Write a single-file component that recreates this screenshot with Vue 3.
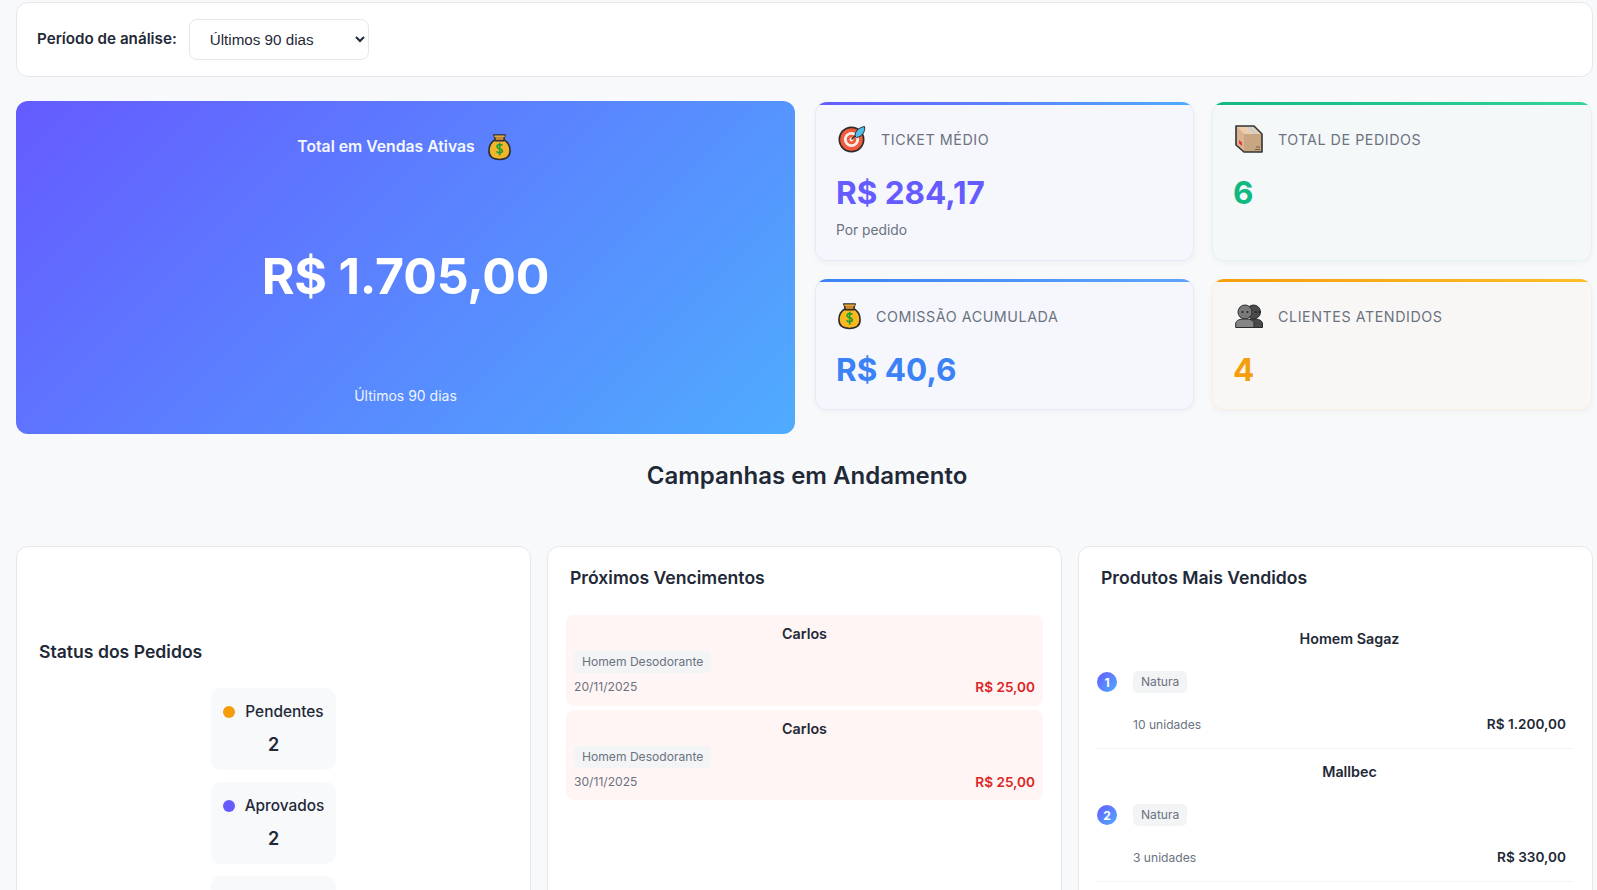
<template>
  <div class="page">
    <section class="filter-bar">
      <label class="filter-label" for="periodo">Período de análise:</label>
      <select id="periodo" class="filter-select">
        <option>Últimos 90 dias</option>
        <option>Últimos 30 dias</option>
        <option>Este ano</option>
      </select>
    </section>

    <section class="overview">
      <div class="hero">
        <div class="hero-title">
          <span>Total em Vendas Ativas</span>
          <svg class="emoji bag" viewBox="0 0 24 28"><use href="#bag-icon" /></svg>
        </div>
        <div class="hero-value">R$ 1.705,00</div>
        <div class="hero-sub">Últimos 90 dias</div>
      </div>

      <div class="stats">
        <article v-for="s in stats" :key="s.label" :class="['stat', s.tone]">
          <header class="stat-head">
            <svg v-if="s.icon === 'target'" class="emoji" viewBox="0 0 28 28">
              <circle cx="13.5" cy="14.5" r="13" fill="#2b2b2b" />
              <circle cx="13.5" cy="14.5" r="11.3" fill="#ef5b3c" />
              <circle cx="13.5" cy="14.5" r="7.6" fill="#f8efe8" />
              <circle cx="13.5" cy="14.5" r="4.8" fill="#ef5b3c" />
              <circle cx="13.5" cy="14.5" r="2" fill="#f8efe8" />
              <path d="M13.5 14.5 L19 9" stroke="#333" stroke-width="1.4" />
              <path d="M17 11 C17 6 21 2.5 26.5 1.5 C27.5 7 24 11.5 18.5 12.5 Z" fill="#4fc3ee" stroke="#2b2b2b" stroke-width="1" />
            </svg>
            <svg v-else-if="s.icon === 'box'" class="emoji" viewBox="0 0 28 28">
              <path d="M1 1 H19 L27 9 V27 H9 L1 20 Z" fill="#c9a682" />
              <path d="M1 1 H19 L27 9 H9 Z" fill="#eccdb0" />
              <path d="M1 1 L9 9 V27 L1 20 Z" fill="#d9b392" />
              <path d="M11 1 H15 L22 9 H18 Z" fill="#c9cfd6" />
              <path d="M4 15 L7 17.5 V21 L4 18.5 Z" fill="#e2374a" />
              <path d="M21 22 H25 M20 24.5 H25" stroke="#6f5a48" stroke-width="1" />
              <path d="M1 1 H19 L27 9 V27 H9 L1 20 Z" fill="none" stroke="#333" stroke-width="1.6" stroke-linejoin="round" />
            </svg>
            <svg v-else-if="s.icon === 'bag'" class="emoji bag" viewBox="0 0 24 28"><use href="#bag-icon" /></svg>
            <svg v-else class="emoji" viewBox="0 0 28 24">
              <circle cx="18.5" cy="8" r="7" fill="#4a4a4a" stroke="#2b2b2b" />
              <path d="M12 23.5 V20 C12 16.5 15 15 18.5 15 C23 15 27.5 16 27.5 20 V23.5 Z" fill="#4a4a4a" stroke="#2b2b2b" />
              <circle cx="10" cy="8" r="7" fill="#7a7a7a" stroke="#2b2b2b" />
              <path d="M.7 23.5 V20 C.7 16 5 15 10 15 C15 15 19 16 19 20 V23.5 Z" fill="#858585" stroke="#2b2b2b" />
              <circle cx="7.5" cy="8" r="1" fill="#222" />
              <circle cx="12.5" cy="8" r="1" fill="#222" />
              <circle cx="21" cy="8" r="1" fill="#222" />
              <circle cx="24.5" cy="8" r="1" fill="#222" />
            </svg>
            <span class="stat-label">{{ s.label }}</span>
          </header>
          <div class="stat-value">{{ s.value }}</div>
          <div v-if="s.note" class="stat-note">{{ s.note }}</div>
        </article>
      </div>
    </section>

    <h2 class="section-title">Campanhas em Andamento</h2>

    <section class="panels">
      <div class="panel panel-status">
        <h3 class="panel-title">Status dos Pedidos</h3>
        <div class="status-list">
          <div v-for="st in statuses" :key="st.name" class="status-item">
            <div class="status-name">
              <span class="dot" :style="{ background: st.color }"></span>
              {{ st.name }}
            </div>
            <div class="status-count">{{ st.count }}</div>
          </div>
          <!-- third status starts right at the fold, only its box shows -->
          <div class="status-item"></div>
        </div>
      </div>

      <div class="panel">
        <h3 class="panel-title">Próximos Vencimentos</h3>
        <div class="due-list">
          <div v-for="d in dues" :key="d.date" class="due">
            <div class="due-name">Carlos</div>
            <span class="chip due-chip">Homem Desodorante</span>
            <div class="due-foot">
              <span class="due-date">{{ d.date }}</span>
              <span class="due-price">R$ 25,00</span>
            </div>
          </div>
        </div>
      </div>

      <div class="panel">
        <h3 class="panel-title">Produtos Mais Vendidos</h3>
        <div class="products">
          <div v-for="(p, i) in products" :key="p.name" class="product">
            <div class="product-name">{{ p.name }}</div>
            <div class="product-brand">
              <span class="rank">{{ i + 1 }}</span>
              <span class="chip">Natura</span>
            </div>
            <div class="product-foot">
              <span class="units">{{ p.units }}</span>
              <span class="product-price">{{ p.price }}</span>
            </div>
          </div>
        </div>
      </div>
    </section>

    <svg class="defs" width="0" height="0">
      <defs>
        <g id="bag-icon">
          <path d="M7.500 6.500 C3 9 1 13.500 1 18 C1 24 5.500 27 12 27 C18.500 27 23 24 23 18 C23 13.500 21 9 16.500 6.500 Z" fill="#fbb91f" stroke="#2b2b2b" stroke-width="1.700" />
          <path d="M6 1.500 H18 L17 4 L16.500 7.500 H7.500 L7 4 Z" fill="#c98a2e" stroke="#2b2b2b" stroke-width="1.500" stroke-linejoin="round" />
          <path d="M6.500 2 H17.500 V3.500 H6.500 Z" fill="#e8a93a" />
          <path d="M15 12.500 C14 11 9.500 11 9.500 13.500 C9.500 16.500 15 15 15 18 C15 20.500 10 20.500 9 18.500 M12.200 9.500 V23" fill="none" stroke="#22a02f" stroke-width="1.700" />
        </g>
      </defs>
    </svg>
  </div>
</template>

<script setup>
const stats = [
  { label: 'TICKET MÉDIO', value: 'R$ 284,17', note: 'Por pedido', icon: 'target', tone: 'purple' },
  { label: 'TOTAL DE PEDIDOS', value: '6', icon: 'box', tone: 'green' },
  { label: 'COMISSÃO ACUMULADA', value: 'R$ 40,6', icon: 'bag', tone: 'blue' },
  { label: 'CLIENTES ATENDIDOS', value: '4', icon: 'people', tone: 'orange' },
]

const statuses = [
  { name: 'Pendentes', count: 2, color: '#f59e0b' },
  { name: 'Aprovados', count: 2, color: '#655bff' },
]

const dues = [{ date: '20/11/2025' }, { date: '30/11/2025' }]

const products = [
  { name: 'Homem Sagaz', units: '10 unidades', price: 'R$ 1.200,00' },
  { name: 'Mallbec', units: '3 unidades', price: 'R$ 330,00' },
]
</script>

<style>
html, body { margin: 0; height: 890px; overflow: hidden; background: #f8f9fb; }
</style>

<style scoped>
.page {
  box-sizing: border-box;
  height: 890px;
  overflow: hidden;
  padding: 2px 4px 0 16px;
  background: #f8f9fb;
  font-family: Inter, "Liberation Sans", sans-serif;
  color: #1f2937;
}

.filter-bar {
  box-sizing: border-box;
  height: 75px;
  display: flex;
  align-items: center;
  gap: 12px;
  padding: 0 20px;
  background: #fff;
  border: 1px solid #e5e7eb;
  border-radius: 12px;
}
.filter-label { font-size: 15.2px; font-weight: 600; position: relative; top: -1px; }
.filter-select {
  box-sizing: border-box;
  width: 180px;
  height: 41px;
  padding: 0 12px 0 16px;
  background: #fff;
  border: 1px solid #e5e7eb;
  border-radius: 8px;
  font-family: "Liberation Sans", sans-serif;
  font-size: 15.2px;
  color: #1f2937;
}

.overview { display: flex; gap: 20px; margin-top: 24px; }
.hero {
  box-sizing: border-box;
  width: 779px;
  flex: none;
  height: 333px;
  display: flex;
  flex-direction: column;
  align-items: center;
  justify-content: space-between;
  padding: 30px 20px 30px;
  border-radius: 12px;
  background: linear-gradient(135deg, #655bff 0%, #4facfe 100%);
  color: #fff;
}
.hero-title { display: flex; align-items: center; gap: 13px; margin-right: 3px; font-size: 15.75px; font-weight: 600; opacity: .95; }
.hero-title .bag { margin-top: 2px; }
.hero-value { margin-top: 3px; font-size: 50px; font-weight: 700; line-height: 60px; letter-spacing: -.2px; }
.hero-sub { font-size: 14px; opacity: .9; }

.stats {
  flex: 1;
  display: grid;
  grid-template-columns: 379px 380px;
  grid-template-rows: 159px 131px;
  gap: 18px;
  margin-top: 1px;
}
.stat {
  position: relative;
  box-sizing: border-box;
  padding: 23px 21px 0;
  border-radius: 12px;
  overflow: hidden;
  box-shadow: inset 0 0 0 1px var(--edge), 0 2px 6px rgba(0, 0, 0, .04);
}
.stat::before {
  content: "";
  position: absolute;
  left: 0;
  right: 0;
  top: 0;
  height: 3px;
}
.purple { --edge: #e8e8f9; background: #f6f7fc; }
.purple::before { background: linear-gradient(90deg, #655bff, #4facfe); }
.purple .stat-value { color: #655bff; }
.green { --edge: #e4f3ee; background: #f4f8f9; }
.green::before { background: linear-gradient(90deg, #10b981, #34d399); }
.green .stat-value { color: #10b981; }
.blue { --edge: #e3ebf8; background: #f5f7fc; }
.blue::before { background: linear-gradient(90deg, #3b82f6, #60a5fa); }
.blue .stat-value { color: #3b82f6; }
.orange { --edge: #f8efdf; background: #f9f7f5; }
.orange::before { background: linear-gradient(90deg, #f59e0b, #fbbf24); }
.orange .stat-value { color: #f59e0b; }

.stat-head { display: flex; align-items: center; gap: 15px; height: 28px; padding-left: 2px; }
.emoji { width: 28px; height: 28px; flex: none; }
.emoji.bag { width: 23px; height: 28px; }
.stat-label { font-size: 14.3px; letter-spacing: .55px; color: #6b7280; }
.stat-value { margin-top: 18px; font-size: 31.5px; font-weight: 700; line-height: 44px; }
.stat-note { margin-top: 7px; font-size: 13.8px; color: #6b7280; }

.section-title {
  margin: 27px 0 0;
  padding-left: 5px;
  text-align: center;
  font-size: 24px;
  font-weight: 600;
  line-height: 30px;
  color: #1f2937;
}

.panels {
  display: grid;
  grid-template-columns: repeat(3, 1fr);
  gap: 16px;
  margin-top: 55px;
}
.panel {
  box-sizing: border-box;
  height: 520px;
  padding: 20px 18px;
  background: #fff;
  border: 1px solid #e5e7eb;
  border-radius: 12px;
}
.panel-title {
  margin: 0 0 0 4px;
  font-size: 17.6px;
  font-weight: 600;
  line-height: 22px;
  color: #1f2937;
}
.panel-status { padding-top: 94px; }
.status-list { display: flex; flex-direction: column; align-items: center; gap: 12px; margin-top: 25px; }
.status-item {
  box-sizing: border-box;
  width: 125px;
  height: 82px;
  padding: 13px 0 0;
  border-radius: 10px;
  background: #f8f9fb;
  text-align: center;
}
.status-name {
  display: flex;
  align-items: center;
  justify-content: center;
  gap: 10px;
  font-size: 15.4px;
  font-weight: 500;
  line-height: 22px;
}
.dot { width: 12px; height: 12px; border-radius: 50%; flex: none; }
.status-count { margin-top: 10px; font-size: 18px; font-weight: 600; line-height: 24px; }

.due-list { display: flex; flex-direction: column; gap: 4px; margin-top: 26px; }
.due {
  box-sizing: border-box;
  height: 91px;
  padding: 9px 8px;
  border-radius: 8px;
  background: #fff5f4;
}
.due + .due { height: 90px; }
.due-name { text-align: center; font-size: 14.3px; font-weight: 600; line-height: 20px; color: #1f2937; }
.chip {
  display: inline-block;
  padding: 3px 8px;
  border-radius: 5px;
  background: #f3f4f6;
  font-size: 12.1px;
  line-height: 16px;
  color: #6b7280;
}
.due-chip { margin-top: 7px; }
.due-foot { display: flex; justify-content: space-between; align-items: center; margin-top: 5px; }
.due-date { margin-bottom: 1px; font-size: 12.1px; color: #6b7280; }
.due-price { margin-top: 1px; font-size: 13.6px; font-weight: 600; color: #dc2626; }

.products { margin-top: 27px; }
.product { height: 133px; border-bottom: 1px solid #f3f4f6; box-sizing: border-box; padding-top: 13px; }
.product-name { padding-left: 28px; text-align: center; font-size: 14.3px; font-weight: 600; line-height: 20px; color: #1f2937; }
.product-brand { display: flex; align-items: center; gap: 16px; margin-top: 22px; }
.rank {
  width: 20px;
  height: 20px;
  border-radius: 50%;
  display: flex;
  align-items: center;
  justify-content: center;
  background: linear-gradient(135deg, #655bff, #4facfe);
  color: #fff;
  font-size: 12px;
  font-weight: 700;
}
.product-foot {
  display: flex;
  justify-content: space-between;
  align-items: center;
  margin-top: 23px;
  padding: 0 8px 0 36px;
}
.units { font-size: 12.1px; color: #6b7280; }
.product-price { font-size: 13.6px; font-weight: 600; color: #1f2937; }
.defs { position: absolute; }
</style>
